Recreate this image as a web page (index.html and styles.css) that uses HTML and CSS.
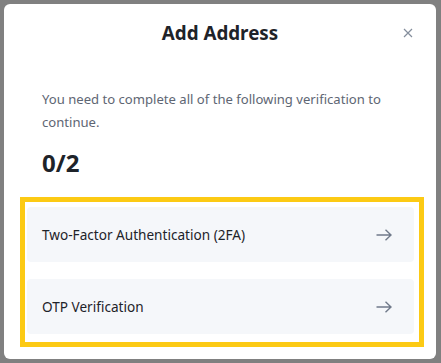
FILE: index.html
```html
<!DOCTYPE html>
<html>
<head>
<meta charset="utf-8">
<link rel="stylesheet" href="styles.css">
</head>
<body>
<div class="modal">
  <div class="header">
    <span></span>
    <h1 class="title">Add Address</h1>
    <button class="close" aria-label="Close">
      <svg width="10" height="10" viewBox="0 0 10 10"><path d="M1 1L9 9M9 1L1 9" stroke="#848e9c" stroke-width="1.2" fill="none"/></svg>
    </button>
  </div>
  <div class="body">
    <p class="desc">You need to complete all of the following verification to continue.</p>
    <div class="count">0/2</div>
    <div class="list">
      <div class="item">
        <span>Two-Factor Authentication (2FA)</span>
        <svg class="arrow" width="16" height="12" viewBox="0 0 16 12"><path d="M0.5 6H15M9.5 0.8L15 6L9.5 11.2" stroke="#707a8a" stroke-width="1.4" fill="none"/></svg>
      </div>
      <div class="item">
        <span>OTP Verification</span>
        <svg class="arrow" width="16" height="12" viewBox="0 0 16 12"><path d="M0.5 6H15M9.5 0.8L15 6L9.5 11.2" stroke="#707a8a" stroke-width="1.4" fill="none"/></svg>
      </div>
    </div>
  </div>
</div>
</body>
</html>
```
FILE: styles.css
```css
html, body {
  margin: 0;
  padding: 0;
}
body {
  background: #808080;
  width: 441px;
  height: 363px;
  overflow: hidden;
  font-family: "Noto Sans", "Open Sans", sans-serif;
  color: #1e2329;
}
.modal {
  margin: 4px;
  width: 432px;
  height: 355px;
  background: #fff;
  border-radius: 6px;
  box-sizing: border-box;
}
.header {
  height: 58px;
  display: grid;
  grid-template-columns: 1fr auto 1fr;
  align-items: center;
}
.title {
  margin: 0;
  font-size: 18.8px;
  font-weight: 700;
  line-height: 24px;
}
.close {
  justify-self: end;
  margin-right: 23px;
  border: 0;
  background: none;
  padding: 0;
  width: 10px;
  height: 10px;
  display: flex;
}
.body {
  padding: 26px 0 0 38px;
}
.desc {
  margin: 0 36px 0 0;
  font-size: 13.1px;
  line-height: 23px;
  color: #5e6673;
}
.count {
  margin-top: 13px;
  font-size: 24px;
  font-weight: 700;
  line-height: 32px;
}
.list {
  margin: 18px 0 0 -22px;
  width: 404px;
  box-sizing: border-box;
  border: 5px solid #fcca14;
  padding: 5px 5px 8px 2px;
  display: flex;
  flex-direction: column;
  gap: 17px;
}
.item {
  height: 55px;
  background: #f5f7fa;
  border-radius: 4px;
  display: flex;
  align-items: center;
  justify-content: space-between;
  padding: 0 22px 0 15px;
  font-size: 13.6px;
  color: #1e2329;
}
.arrow {
  display: block;
}
```
